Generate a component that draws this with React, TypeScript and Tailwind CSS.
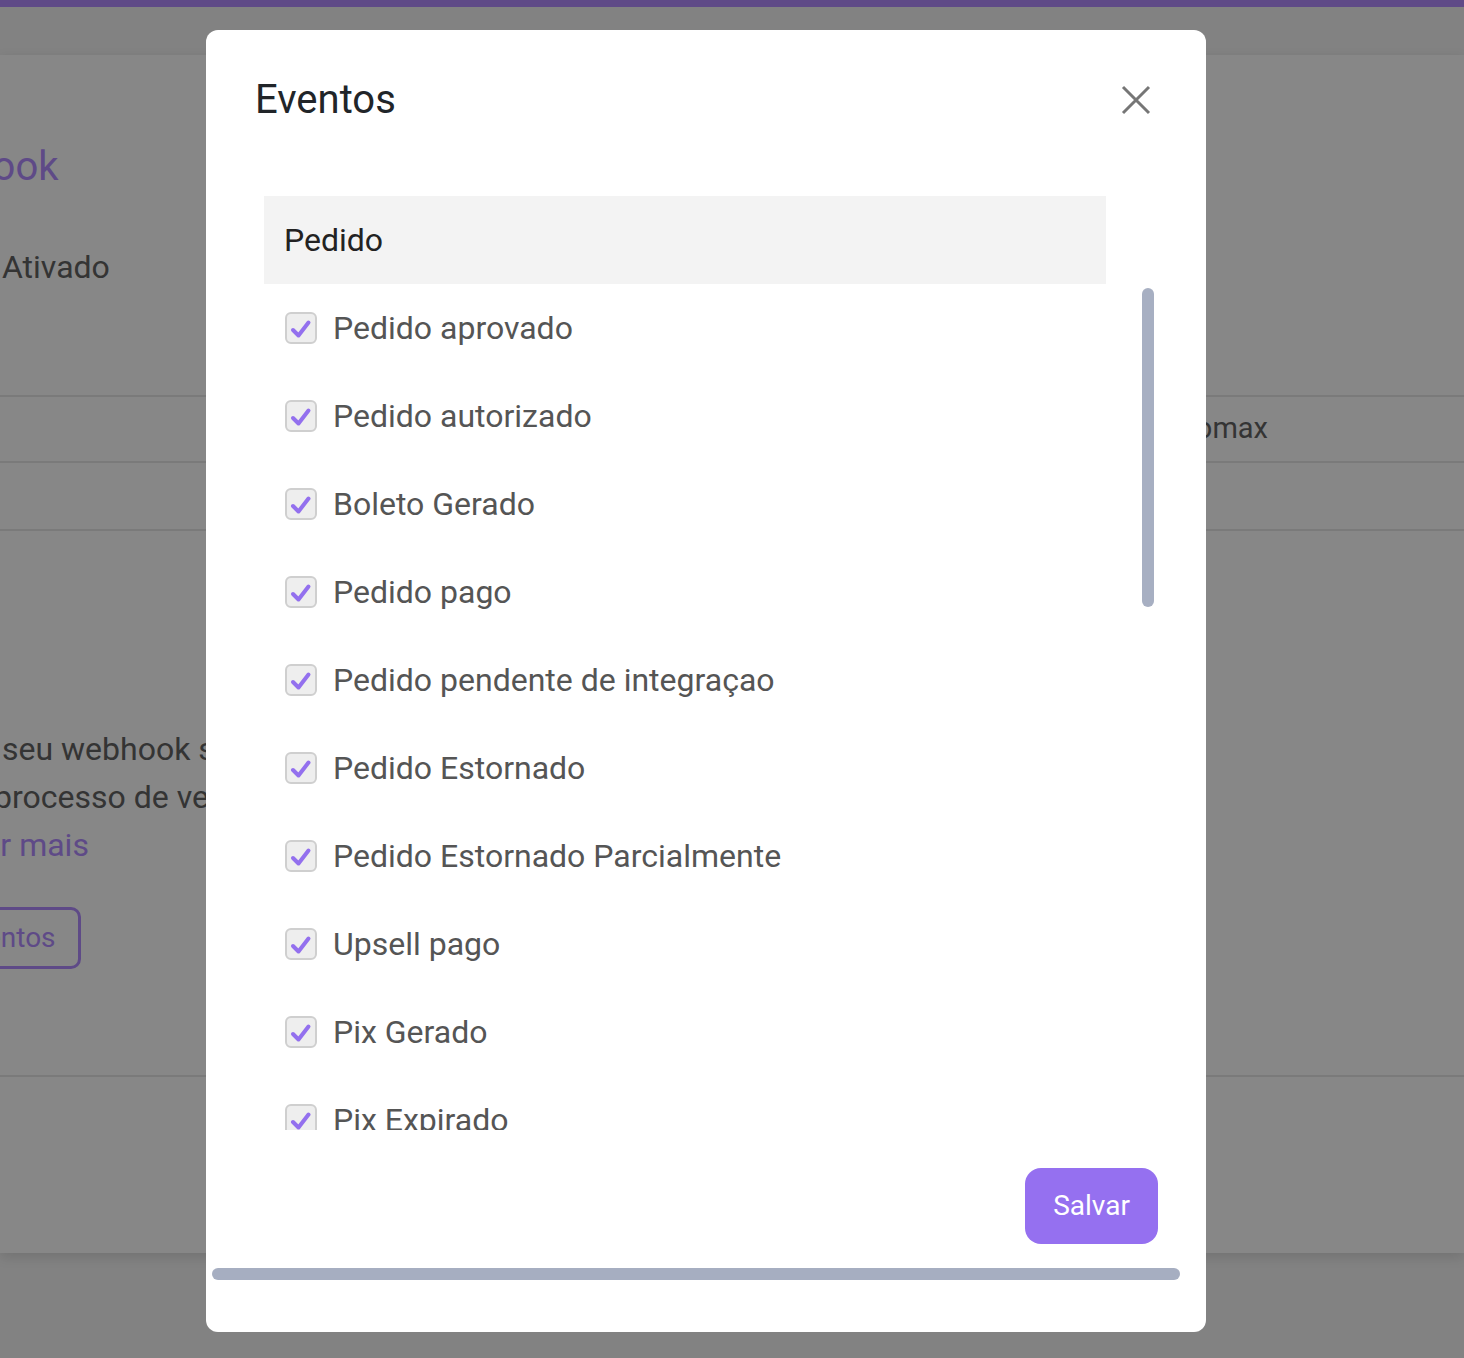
import React from "react";

const eventos = [
  "Pedido aprovado",
  "Pedido autorizado",
  "Boleto Gerado",
  "Pedido pago",
  "Pedido pendente de integraçao",
  "Pedido Estornado",
  "Pedido Estornado Parcialmente",
  "Upsell pago",
  "Pix Gerado",
  "Pix Expirado",
];

function Checkbox() {
  return (
    <span className="flex h-[32px] w-[32px] shrink-0 items-center justify-center rounded-[6px] border-2 border-[#cfcfcf] bg-[#eeeeee]">
      <svg width="28" height="28" viewBox="0 0 28 28" fill="none">
        <path
          d="M6 16 L11.5 21.5 L21.5 8.5"
          stroke="#9370ee"
          strokeWidth="4"
          strokeLinecap="round"
          strokeLinejoin="round"
        />
      </svg>
    </span>
  );
}

function CloseIcon() {
  return (
    <svg width="30" height="30" viewBox="0 0 30 30" fill="none">
      <path d="M2 2 L28 28 M28 2 L2 28" stroke="#767676" strokeWidth="3" />
    </svg>
  );
}

export default function App() {
  return (
    <div className="relative min-h-screen overflow-hidden bg-[#f5f5f5] font-['Roboto',sans-serif]">
      {/* Page behind the modal */}
      <div className="h-[7px] bg-[#b38dff]" />
      <div className="mt-[48px] flex h-[1198px] flex-col overflow-hidden bg-white shadow-[0_4px_12px_rgba(0,0,0,0.12)]">
        <div className="ml-[-108px] mt-[88px] text-[40px] leading-[48px] text-[#b28cff] whitespace-nowrap">
          Webhook
        </div>
        <div className="ml-[2px] mt-[56px] text-[32px] leading-[40px] text-[#636363] whitespace-nowrap">
          Ativado
        </div>
        <div className="mt-[108px] border-t-2 border-[#e6e6e6]" />
        <div className="flex h-[64px] items-center whitespace-nowrap text-[29px] text-[#636363]">
          <span className="ml-[1168px]">Promax</span>
        </div>
        <div className="border-t-2 border-[#e6e6e6]" />
        <div className="h-[66px]" />
        <div className="border-t-2 border-[#e6e6e6]" />
        <div className="flex h-[544px] flex-col whitespace-nowrap text-[32px] leading-[48px] text-[#636363]">
          <div className="ml-[2px] mt-[194px]">seu webhook será notificado</div>
          <div className="ml-[-6px]">processo de venda</div>
          <div className="ml-[-71px] text-[#b28cff]">Saber mais</div>
          <div className="mt-[38px] flex">
            <span className="ml-[-72px] flex h-[62px] items-center rounded-[10px] border-[3px] border-[#b28cff] pl-[26px] pr-[22px] text-[28px] text-[#b28cff]">
              Eventos
            </span>
          </div>
        </div>
        <div className="border-t-2 border-[#e6e6e6]" />
      </div>

      {/* Overlay + modal */}
      <div className="fixed inset-0 bg-black/[0.47]">
        <div className="ml-[206px] mt-[30px] flex h-[1302px] w-[1000px] flex-col rounded-[12px] bg-white">
          <div className="flex h-[140px] shrink-0 items-center justify-between pl-[49px] pr-[55px]">
            <h2 className="text-[40px] font-normal text-[#212529]">Eventos</h2>
            <button className="flex h-[30px] w-[30px] items-center justify-center">
              <CloseIcon />
            </button>
          </div>

          <div className="ml-[58px] mt-[26px] flex h-[934px] w-[896px] flex-col">
            <div className="flex h-[88px] w-[842px] shrink-0 items-center bg-[#f3f3f3] px-[20px] text-[32px] text-[#222222]">
              Pedido
            </div>
            <div className="flex min-h-0 flex-1">
              <div className="flex-1 overflow-hidden">
                {eventos.map((ev) => (
                  <label
                    key={ev}
                    className="flex h-[88px] items-center gap-[16px] px-[21px] text-[32px] text-[#555555] whitespace-nowrap"
                  >
                    <Checkbox />
                    <span>{ev}</span>
                  </label>
                ))}
              </div>
              <div className="w-[54px] shrink-0 pl-[36px] pt-[4px]">
                <div className="h-[319px] w-[12px] rounded-full bg-[#a7afc2]" />
              </div>
            </div>
          </div>

          <div className="flex justify-end pr-[48px] pt-[38px]">
            <button className="flex h-[76px] w-[133px] items-center justify-center rounded-[16px] bg-[#9570f0] text-[28px] text-white">
              Salvar
            </button>
          </div>
          <div className="ml-[6px] mt-[24px] h-[12px] w-[968px] rounded-full bg-[#a6aec1]" />
        </div>
      </div>
    </div>
  );
}
